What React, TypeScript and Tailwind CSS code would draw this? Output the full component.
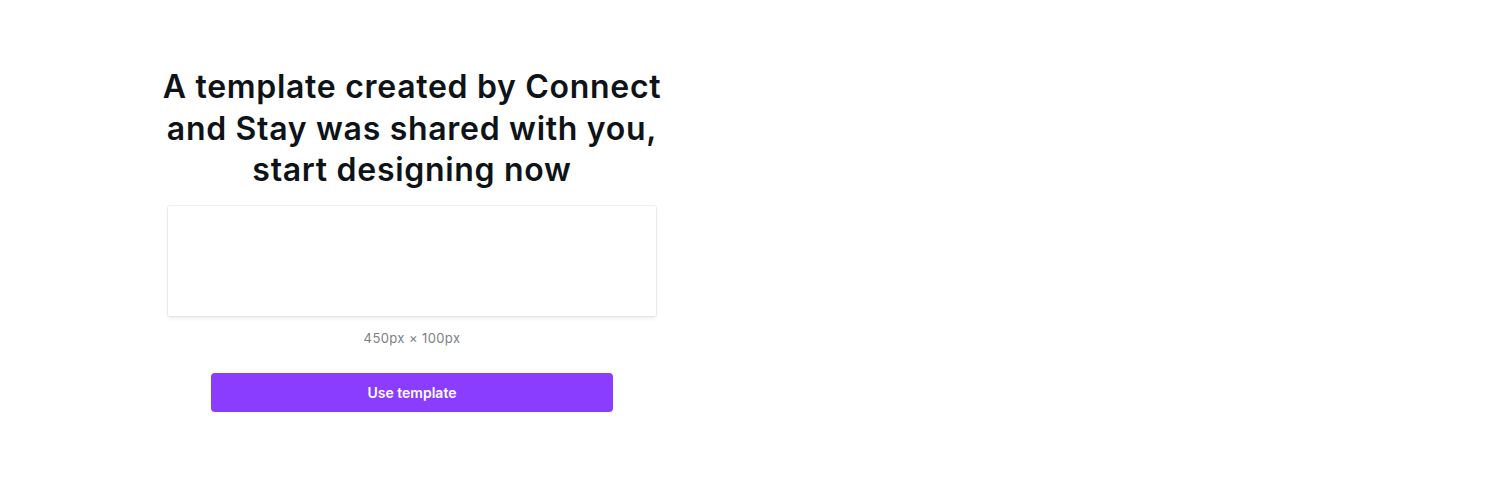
export default function App() {
  return (
    <div className="min-h-[500px] w-full bg-white">
      <div className="ml-[162px] flex w-[500px] flex-col items-center pt-[66px]">
        <h1
          className="text-center text-[32px] font-semibold leading-[41.5px] tracking-[0.7px] text-[#0e1318]"
          style={{ fontFamily: "Inter, 'Noto Sans', sans-serif" }}
        >
          A template created by Connect
          <br />
          and Stay was shared with you,
          <br />
          start designing now
        </h1>

        <div className="mt-[15px] h-[110px] w-[488px] rounded-[2px] bg-white shadow-[0_0_0_1px_rgba(64,87,109,0.07),0_2px_4px_rgba(53,71,90,0.12)]" />

        <p
          className="mt-[12px] text-[13px] leading-5 tracking-[0.4px] text-[#7b7f85]"
          style={{ fontFamily: "Inter, 'Noto Sans', sans-serif" }}
        >
          450px × 100px
        </p>

        <button
          className="mt-[25px] h-[39px] w-[402px] rounded-[4px] bg-[#8b3dff] text-[14px] font-semibold text-white"
          style={{ fontFamily: "Inter, 'Noto Sans', sans-serif" }}
        >
          Use template
        </button>
      </div>
    </div>
  );
}
